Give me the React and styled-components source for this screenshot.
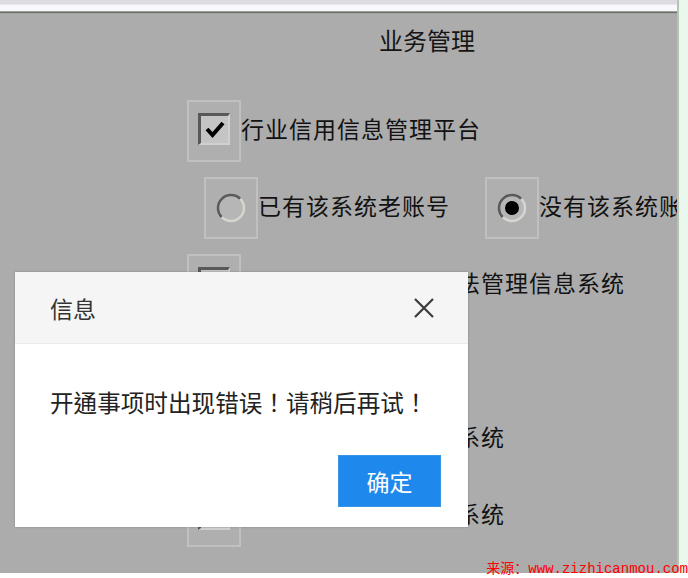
import React from "react";
import styled, { createGlobalStyle } from "styled-components";

const GlobalStyle = createGlobalStyle`
  html, body { margin: 0; padding: 0; background: #ffffff; }
  body {
    font-family: "Noto Sans CJK SC", "Noto Sans", sans-serif;
  }
  * { box-sizing: border-box; }
`;

const Screen = styled.div`
  position: relative;
  width: 688px;
  height: 578px;
  display: flex;
  flex-direction: column;
  overflow: hidden;
  background: #ffffff;
`;

const Upper = styled.div`
  display: flex;
  height: 573px;
`;

const MainColumn = styled.div`
  width: 679px;
  display: flex;
  flex-direction: column;
  border-right: 2px solid #b6c4b6;
`;

const TopBar = styled.div`
  height: 14px;
  flex: none;
  background: linear-gradient(
    to bottom,
    #dcdce1 0px,
    #dcdce1 4px,
    #e9e9ef 4px,
    #e9e9ef 5px,
    #f8f9fd 5px,
    #f8f9fd 11px,
    #9a9e9a 11px,
    #9a9e9a 12px,
    #6c716c 12px,
    #6c716c 13px,
    #a2a2a2 13px
  );
`;

const Panel = styled.div`
  flex: 1;
  background: #acacac;
  overflow: hidden;
  padding-top: 12px;
`;

const Content = styled.div`
  margin-left: 187px;
  width: 480px;
  display: flex;
  flex-direction: column;
  gap: 15px;
`;

const Title = styled.div`
  text-align: center;
  font-size: 24px;
  line-height: 28px;
  color: #151515;
  margin-bottom: 31px;
`;

const Row = styled.div`
  display: flex;
  align-items: center;
  height: 62px;
  padding-left: ${(p) => p.$indent || 0}px;
  white-space: nowrap;
`;

const OptionBox = styled.div`
  width: 54px;
  height: 62px;
  flex: none;
  border: 2px solid #c0c0c0;
  background: #afafaf;
  display: flex;
  justify-content: center;
  align-items: ${(p) => (p.$top ? "flex-start" : "center")};
  padding-top: ${(p) => (p.$top ? "11px" : "0")};
`;

const CheckSquare = styled.div`
  width: 32px;
  height: 32px;
  border-top: 3px solid #585858;
  border-left: 3px solid #585858;
  border-right: 2px solid #d0d0d0;
  border-bottom: 2px solid #d0d0d0;
  background: #c4c4c4;
  display: flex;
  align-items: center;
  justify-content: center;
`;

const Label = styled.span`
  font-size: 23px;
  letter-spacing: 1px;
  line-height: 28px;
  color: #121212;
  margin-right: ${(p) => p.$after || 0}px;
  margin-top: -6px;
`;

const Dialog = styled.div`
  position: absolute;
  left: 15px;
  top: 272px;
  width: 453px;
  height: 255px;
  background: #ffffff;
  box-shadow: 0 0 2px rgba(0, 0, 0, 0.25);
  display: flex;
  flex-direction: column;
`;

const DialogHeader = styled.div`
  height: 72px;
  flex: none;
  background: #f5f5f5;
  border-bottom: 1px solid #ececec;
  display: flex;
  align-items: center;
  justify-content: space-between;
  padding: 0 33px 0 35px;
`;

const DialogTitle = styled.span`
  font-size: 23px;
  color: #333333;
`;

const CloseButton = styled.button`
  width: 22px;
  height: 22px;
  padding: 0;
  border: none;
  background: transparent;
  display: flex;
  align-items: center;
  justify-content: center;
`;

const DialogBody = styled.div`
  padding: 46px 0 0 35px;
  font-family: "Noto Sans CJK TC", "Noto Sans CJK SC", sans-serif;
  font-size: 23.6px;
  line-height: 24px;
  color: #222222;
  white-space: nowrap;
`;

const Bang = styled.span`
  display: inline-block;
  width: 1em;
  text-align: center;
`;

const DialogFooter = styled.div`
  margin-top: auto;
  display: flex;
  justify-content: flex-end;
  padding: 0 27px 20px 0;
`;

const PrimaryButton = styled.button`
  width: 103px;
  height: 52px;
  border: 1px solid #3a95e6;
  background: #1e88ec;
  color: #ffffff;
  font-family: "Noto Sans CJK SC", sans-serif;
  font-size: 23px;
  padding: 0;
`;

const SideStrip = styled.div`
  flex: 1;
  background: #eaf7ec;
`;

const BottomStrip = styled.div`
  height: 5px;
  background: #ffffff;
`;

const Watermark = styled.div`
  position: absolute;
  right: 0;
  bottom: 1px;
  font-family: "Liberation Mono", "Noto Sans CJK SC", monospace;
  font-size: 14px;
  line-height: 16px;
  color: #ff0000;
  white-space: nowrap;
`;

const Check = () => (
  <svg width="22" height="20" viewBox="0 0 22 20">
    <path d="M3 9 L8.5 15 L19 3" fill="none" stroke="#000" strokeWidth="4" strokeLinejoin="miter" />
  </svg>
);

const Radio = ({ checked }) => (
  <svg width="32" height="32" viewBox="0 0 32 32">
    <circle cx="16" cy="16" r="13" fill="#b6b6b6" />
    <path d="M25.2 6.8 A13 13 0 0 0 6.8 25.2" fill="none" stroke="#5a5a5a" strokeWidth="2.5" />
    <path d="M6.8 25.2 A13 13 0 0 0 25.2 6.8" fill="none" stroke="#d6d6d0" strokeWidth="2.5" />
    {checked && <circle cx="16" cy="16" r="7" fill="#000" />}
  </svg>
);

const CloseIcon = () => (
  <svg width="20" height="20" viewBox="0 0 20 20">
    <path d="M1 1 L19 19 M19 1 L1 19" stroke="#3c3c3c" strokeWidth="2.2" />
  </svg>
);

const CheckRow = ({ checked, label }) => (
  <Row>
    <OptionBox $top>
      <CheckSquare>{checked && <Check />}</CheckSquare>
    </OptionBox>
    <Label>{label}</Label>
  </Row>
);

export default function App() {
  return (
    <>
      <GlobalStyle />
      <Screen>
        <Upper>
          <MainColumn>
            <TopBar />
            <Panel>
              <Content>
                <Title>业务管理</Title>
                <CheckRow checked label="行业信用信息管理平台" />
                <Row $indent={17}>
                  <OptionBox>
                    <Radio />
                  </OptionBox>
                  <Label $after={35}>已有该系统老账号</Label>
                  <OptionBox>
                    <Radio checked />
                  </OptionBox>
                  <Label>没有该系统账号</Label>
                </Row>
                <CheckRow label="住房城乡建设行政执法管理信息系统" />
                <CheckRow label="安全生产许可系统" />
                <CheckRow label="建筑市场监管一体化系统" />
                <CheckRow label="建设工程施工图审查系统" />
              </Content>
            </Panel>
          </MainColumn>
          <SideStrip />
        </Upper>
        <BottomStrip />
        <Dialog>
          <DialogHeader>
            <DialogTitle>信息</DialogTitle>
            <CloseButton aria-label="关闭">
              <CloseIcon />
            </CloseButton>
          </DialogHeader>
          <DialogBody>
            开通事项时出现错误<Bang>！</Bang>请稍后再试<Bang>！</Bang>
          </DialogBody>
          <DialogFooter>
            <PrimaryButton>确定</PrimaryButton>
          </DialogFooter>
        </Dialog>
        <Watermark>来源：www.zizhicanmou.com</Watermark>
      </Screen>
    </>
  );
}
